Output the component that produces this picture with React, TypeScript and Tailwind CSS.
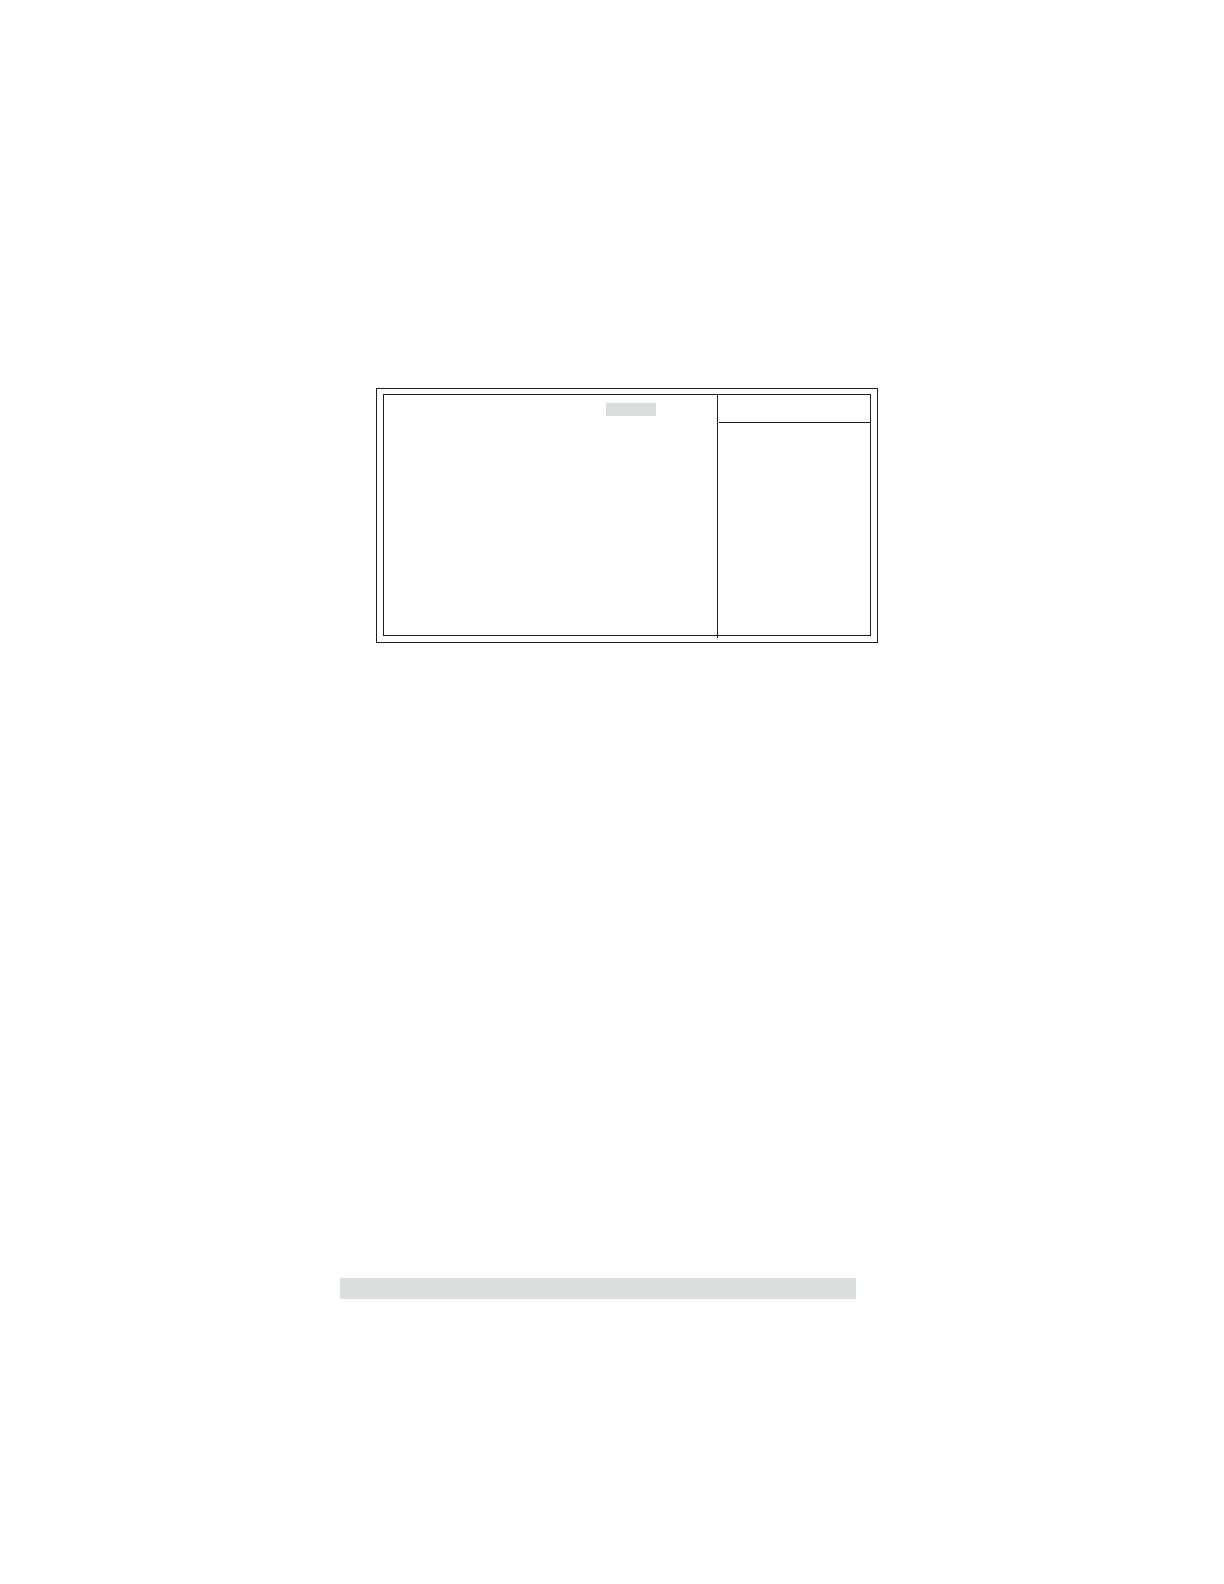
export default function App() {
  return (
    <main className="min-h-screen bg-white pt-[388px] pb-[285px]">
      <section
        aria-label="Setup screen"
        className="mr-[346px] ml-[376px] border border-[#231f20] px-[6px] pt-[5px] pb-[6px]"
      >
        <div className="flex h-[242px] border border-[#231f20]">
          <div className="flex flex-1 justify-end pt-2 pr-[61px]">
            <div className="h-[13px] w-[50px] bg-[#dbdcdc]" />
          </div>
          <aside
            aria-label="Help"
            className="-mb-[3px] w-[153px] border-l border-[#231f20] pl-px"
          >
            <header className="h-7 border-b border-[#231f20]" />
          </aside>
        </div>
      </section>
      <footer className="mt-[635px] mr-[368px] ml-[340px] h-[21px] bg-[#dcdddd]" />
    </main>
  );
}
